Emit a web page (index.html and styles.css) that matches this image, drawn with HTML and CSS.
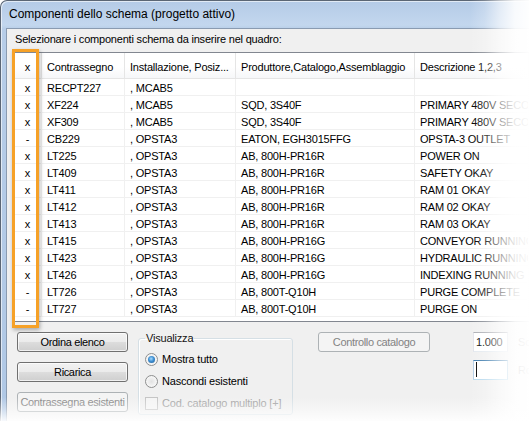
FILE: index.html
```html
<!DOCTYPE html>
<html lang="it">
<head>
  <meta charset="UTF-8" />
  <meta name="viewport" content="width=device-width, initial-scale=1" />
  <title>Componenti dello schema (progetto attivo)</title>
  <link rel="stylesheet" href="styles.css">
</head>
<body>
  <div class="window" role="dialog" aria-label="Componenti dello schema (progetto attivo)">
    <div class="titlebar">Componenti dello schema (progetto attivo)</div>

    <div class="client">
      <p class="prompt">Selezionare i componenti schema da inserire nel quadro:</p>

      <div class="list">
        <div class="row head">
          <div class="cell mark">x</div>
          <div class="cell">Contrassegno</div>
          <div class="cell">Installazione, Posiz...</div>
          <div class="cell">Produttore,Catalogo,Assemblaggio</div>
          <div class="cell">Descrizione 1,2,3</div>
        </div>
        <div class="row"><div class="cell mark">x</div><div class="cell">RECPT227</div><div class="cell">, MCAB5</div><div class="cell"></div><div class="cell"></div></div>
        <div class="row"><div class="cell mark">x</div><div class="cell">XF224</div><div class="cell">, MCAB5</div><div class="cell">SQD, 3S40F</div><div class="cell">PRIMARY 480V SECONDARY</div></div>
        <div class="row"><div class="cell mark">x</div><div class="cell">XF309</div><div class="cell">, MCAB5</div><div class="cell">SQD, 3S40F</div><div class="cell">PRIMARY 480V SECONDARY</div></div>
        <div class="row"><div class="cell mark">-</div><div class="cell">CB229</div><div class="cell">, OPSTA3</div><div class="cell">EATON, EGH3015FFG</div><div class="cell">OPSTA-3 OUTLET</div></div>
        <div class="row"><div class="cell mark">x</div><div class="cell">LT225</div><div class="cell">, OPSTA3</div><div class="cell">AB, 800H-PR16R</div><div class="cell">POWER ON</div></div>
        <div class="row"><div class="cell mark">x</div><div class="cell">LT409</div><div class="cell">, OPSTA3</div><div class="cell">AB, 800H-PR16R</div><div class="cell">SAFETY OKAY</div></div>
        <div class="row"><div class="cell mark">x</div><div class="cell">LT411</div><div class="cell">, OPSTA3</div><div class="cell">AB, 800H-PR16R</div><div class="cell">RAM 01 OKAY</div></div>
        <div class="row"><div class="cell mark">x</div><div class="cell">LT412</div><div class="cell">, OPSTA3</div><div class="cell">AB, 800H-PR16R</div><div class="cell">RAM 02 OKAY</div></div>
        <div class="row"><div class="cell mark">x</div><div class="cell">LT413</div><div class="cell">, OPSTA3</div><div class="cell">AB, 800H-PR16R</div><div class="cell">RAM 03 OKAY</div></div>
        <div class="row"><div class="cell mark">x</div><div class="cell">LT415</div><div class="cell">, OPSTA3</div><div class="cell">AB, 800H-PR16G</div><div class="cell">CONVEYOR RUNNING</div></div>
        <div class="row"><div class="cell mark">x</div><div class="cell">LT423</div><div class="cell">, OPSTA3</div><div class="cell">AB, 800H-PR16G</div><div class="cell">HYDRAULIC RUNNING</div></div>
        <div class="row"><div class="cell mark">x</div><div class="cell">LT426</div><div class="cell">, OPSTA3</div><div class="cell">AB, 800H-PR16G</div><div class="cell">INDEXING RUNNING</div></div>
        <div class="row"><div class="cell mark">-</div><div class="cell">LT726</div><div class="cell">, OPSTA3</div><div class="cell">AB, 800T-Q10H</div><div class="cell">PURGE COMPLETE</div></div>
        <div class="row"><div class="cell mark">-</div><div class="cell">LT727</div><div class="cell">, OPSTA3</div><div class="cell">AB, 800T-Q10H</div><div class="cell">PURGE ON</div></div>

        <!-- callout round the mark column -->
        <div class="highlight"></div>
      </div>

      <div class="controls">
        <div class="buttons">
          <button class="btn" type="button">Ordina elenco</button>
          <button class="btn" type="button">Ricarica</button>
          <button class="btn" type="button" disabled>Contrassegna esistenti</button>
        </div>

        <fieldset class="group">
          <legend>Visualizza</legend>
          <div class="option"><span class="radio checked"></span>Mostra tutto</div>
          <div class="option"><span class="radio"></span>Nascondi esistenti</div>
          <div class="option disabled"><span class="check"></span>Cod. catalogo multiplo [+]</div>
        </fieldset>

        <button class="btn catalog" type="button" disabled>Controllo catalogo</button>

        <div class="fields">
          <div class="field"><span class="input">1.000</span><span class="label">Sc</span></div>
          <div class="field"><span class="input focus"><span class="caret"></span></span><span class="label">Ro</span></div>
        </div>
      </div>
    </div>
  </div>

  <div class="fade-right"></div>
  <div class="fade-bottom"></div>
</body>
</html>
```

FILE: styles.css
```css
html, body {
  margin: 0;
  height: 421px;
}

body {
  position: relative;
  overflow: hidden;
  background: #fff;
  font-family: "Liberation Sans", Arial, sans-serif;
  font-size: 11px;
  letter-spacing: -0.2px;
  color: #000;
}

/* Window frame (right and bottom edges are off the shot) */
.window {
  box-sizing: border-box;
  height: 421px;
  overflow: hidden;
  padding-left: 5px;
  border-top: 1px solid #5b6675;
  border-left: 1px solid #5b6675;
  border-top-left-radius: 7px;
  background: linear-gradient(to bottom, #b4cbe7 0, #c3d7ee 24px, #b7cde8 28px, #b0c8e5 100%);
  box-shadow: inset 1px 1px 0 rgba(255, 255, 255, 0.6);
}

.titlebar {
  height: 27px;
  line-height: 27px;
  padding-left: 3px;
  font-size: 12px;
  letter-spacing: 0;
  white-space: nowrap;
}

.client {
  height: 100%;
  padding: 4px 0 0 6px;
  background: #f0f0f0;
  border-top: 1px solid #8a9bb1;
  border-left: 1px solid #8a9bb1;
}

.prompt {
  margin: 0 0 0 2px;
  line-height: 13px;
  white-space: nowrap;
}

/* List view */
.list {
  position: relative;
  height: 268px;
  margin-top: 6px;
  background: #fff;
  border: 1px solid #828790;
  border-right: 0;
}

.row {
  display: grid;
  grid-template-columns: 28px 83px 111px 179px 1fr;
  border-bottom: 1px solid #f0f0f0;
}

.cell {
  box-sizing: border-box;
  height: 16px;
  padding: 2px 5px 0;
  line-height: 14px;
  white-space: nowrap;
  overflow: hidden;
  border-right: 1px solid #f0f0f0;
}

.cell.mark {
  padding: 2px 0 0;
  text-align: center;
}

.row.head {
  border-bottom: 1px solid #e5e5e5;
  background: linear-gradient(to bottom, #fff 0, #fff 55%, #f6f7f9 100%);
}

.row.head .cell {
  height: 25px;
  padding-top: 8px;
  line-height: 13px;
  border-right-color: #e5e5e5;
}

.row.head .cell.mark {
  padding-top: 8px;
}

.highlight {
  position: absolute;
  left: -2px;
  top: -4px;
  width: 27px;
  height: 279px;
  box-sizing: border-box;
  border: 3px solid #f6a127;
  box-shadow: 1px 2px 4px rgba(0, 0, 0, 0.3);
}

/* Bottom controls */
.controls {
  display: flex;
  align-items: flex-start;
  margin-top: 10px;
}

.buttons {
  display: flex;
  flex-direction: column;
  gap: 10px;
  margin-left: 4px;
}

.btn {
  width: 111px;
  height: 20px;
  padding: 0;
  font: inherit;
  letter-spacing: -0.35px;
  line-height: 18px;
  color: #000;
  border: 1px solid #707070;
  border-radius: 3px;
  background: linear-gradient(to bottom, #f2f2f2 0, #ebebeb 50%, #dddddd 50%, #cfcfcf 100%);
  box-shadow: inset 0 0 0 1px rgba(255, 255, 255, 0.7);
  white-space: nowrap;
  overflow: hidden;
}

.btn:disabled {
  color: #838383;
  border-color: #adb2b5;
  background: #f4f4f4;
  box-shadow: none;
}

.btn.catalog {
  flex: none;
  width: 112px;
  margin-left: 25px;
}

.group {
  flex: none;
  box-sizing: border-box;
  width: 155px;
  margin: 0 0 0 10px;
  padding: 3px 6px 0;
  border: 1px solid #d5dfe5;
  border-radius: 3px;
  box-shadow: inset 1px 1px 0 #fff;
}

.group legend {
  padding: 0 1px;
  line-height: 13px;
  color: #151515;
}

.option {
  display: flex;
  align-items: center;
  gap: 4px;
  height: 22px;
  white-space: nowrap;
}

.option.disabled {
  color: #a0a0a0;
}

.radio {
  position: relative;
  box-sizing: border-box;
  width: 13px;
  height: 13px;
  border: 1px solid #8e8f8f;
  border-radius: 50%;
  background: radial-gradient(circle at 50% 50%, #e2e2e2 0, #f3f3f3 55%, #fbfbfb 100%);
}

.radio.checked::after {
  content: "";
  position: absolute;
  left: 2px;
  top: 2px;
  width: 7px;
  height: 7px;
  border-radius: 50%;
  background: radial-gradient(circle at 45% 40%, #a6dcff 0, #3f8fd2 45%, #1d5a92 100%);
}

.check {
  box-sizing: border-box;
  width: 13px;
  height: 13px;
  border: 1px solid #c4c4c4;
  background: #f4f4f4;
}

.fields {
  display: flex;
  flex-direction: column;
  gap: 8px;
  margin-left: 43px;
}

.field {
  display: flex;
  align-items: center;
  gap: 10px;
  white-space: nowrap;
}

.input {
  box-sizing: border-box;
  width: 35px;
  height: 20px;
  padding-left: 2px;
  line-height: 18px;
  background: #fff;
  border: 1px solid;
  border-color: #abadb3 #dbdfe6 #e3e9ef #e2e3ea;
}

.input.focus {
  border-color: #3d7bad #a4c9e3 #b7d9ed #b5cfe7;
}

.caret {
  display: inline-block;
  width: 1px;
  height: 15px;
  margin-top: 1px;
  background: #000;
  vertical-align: top;
}

.label {
  color: #444;
}

/* Faded screenshot edges */
.fade-right {
  position: absolute;
  top: 0;
  right: 0;
  width: 59px;
  height: 100%;
  background: linear-gradient(to right,
    rgba(255, 255, 255, 0) 0%,
    rgba(255, 255, 255, 0.2) 25%,
    rgba(255, 255, 255, 0.6) 50%,
    rgba(255, 255, 255, 0.9) 76%,
    rgba(255, 255, 255, 0.98) 100%);
}

.fade-bottom {
  position: absolute;
  left: 0;
  bottom: 0;
  width: 100%;
  height: 24px;
  background: linear-gradient(to bottom,
    rgba(255, 255, 255, 0) 0%,
    rgba(255, 255, 255, 0.4) 50%,
    rgba(255, 255, 255, 0.9) 100%);
}
```
